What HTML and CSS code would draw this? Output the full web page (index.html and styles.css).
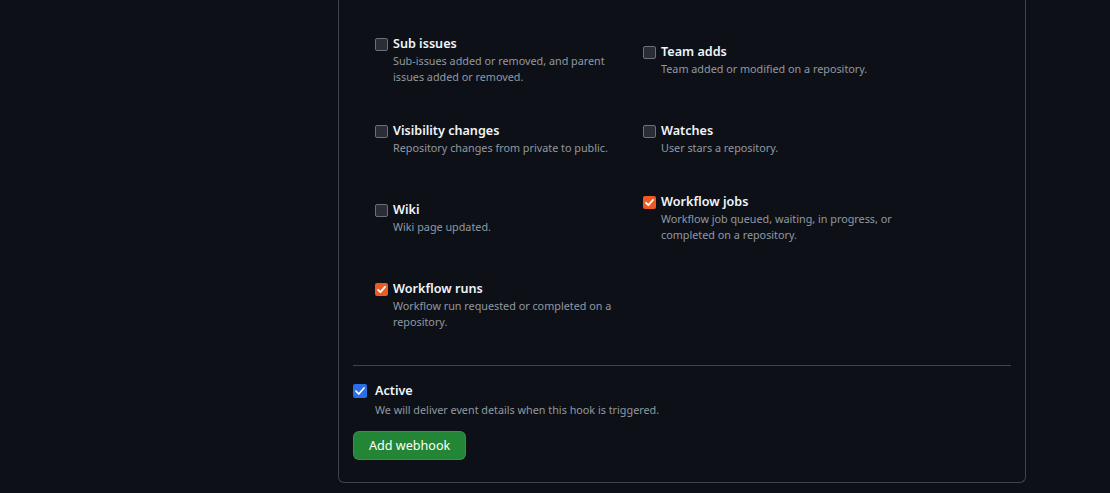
FILE: index.html
```html
<!DOCTYPE html>
<html lang="en">
<head>
<meta charset="utf-8">
<title>Add webhook</title>
<link rel="stylesheet" href="styles.css">
</head>
<body>
<div class="layout">
  <div class="sidebar"></div>
  <main class="box">
    <div class="events">
      <label class="event">
        <span class="cb"></span>
        <span class="event-text">
          <span class="event-title">Sub issues</span>
          <span class="event-note">Sub-issues added or removed, and parent issues added or removed.</span>
        </span>
      </label>
      <label class="event">
        <span class="cb"></span>
        <span class="event-text">
          <span class="event-title">Team adds</span>
          <span class="event-note">Team added or modified on a repository.</span>
        </span>
      </label>
      <label class="event">
        <span class="cb"></span>
        <span class="event-text">
          <span class="event-title">Visibility changes</span>
          <span class="event-note">Repository changes from private to public.</span>
        </span>
      </label>
      <label class="event">
        <span class="cb"></span>
        <span class="event-text">
          <span class="event-title">Watches</span>
          <span class="event-note">User stars a repository.</span>
        </span>
      </label>
      <label class="event">
        <span class="cb"></span>
        <span class="event-text">
          <span class="event-title">Wiki</span>
          <span class="event-note">Wiki page updated.</span>
        </span>
      </label>
      <label class="event">
        <span class="cb cb-checked"><svg viewBox="0 0 13 13" width="13" height="13"><polyline points="3,6.8 5.4,9.2 10,3.8" fill="none" stroke="#fff" stroke-width="1.8" stroke-linecap="round" stroke-linejoin="round"/></svg></span>
        <span class="event-text">
          <span class="event-title">Workflow jobs</span>
          <span class="event-note">Workflow job queued, waiting, in progress, or completed on a repository.</span>
        </span>
      </label>
      <label class="event">
        <span class="cb cb-checked"><svg viewBox="0 0 13 13" width="13" height="13"><polyline points="3,6.8 5.4,9.2 10,3.8" fill="none" stroke="#fff" stroke-width="1.8" stroke-linecap="round" stroke-linejoin="round"/></svg></span>
        <span class="event-text">
          <span class="event-title">Workflow runs</span>
          <span class="event-note">Workflow run requested or completed on a repository.</span>
        </span>
      </label>
    </div>
    <hr class="divider">
    <label class="active">
      <span class="cb-active"><svg viewBox="0 0 14 14" width="14" height="14"><polyline points="3,7.2 5.8,10 11,4" fill="none" stroke="#fff" stroke-width="1.7" stroke-linecap="round" stroke-linejoin="round"/></svg></span>
      <span class="event-text">
        <span class="event-title">Active</span>
        <span class="active-note">We will deliver event details when this hook is triggered.</span>
      </span>
    </label>
    <button class="btn-primary" type="button">Add webhook</button>
  </main>
</div>
</body>
</html>
```

FILE: styles.css
```css
* { box-sizing: border-box; }

html, body {
  margin: 0;
  background: #0d1117;
  color: #f0f6fc;
  font-family: "Noto Sans", "Liberation Sans", sans-serif;
}

.layout {
  display: grid;
  grid-template-columns: 338px 688px;
}

.box {
  border: 1px solid #3d444d;
  border-top: none;
  border-radius: 0 0 6px 6px;
  padding: 0 14px 22px;
}

.events {
  display: grid;
  grid-template-columns: 268px 268px;
  row-gap: 37px;
  align-items: center;
  padding-top: 35px;
  margin-left: 22px;
}

.event {
  display: flex;
  align-items: flex-start;
}

.cb {
  flex: none;
  width: 13px;
  height: 13px;
  margin-top: 3px;
  margin-right: 5px;
  border: 1px solid #6a6f78;
  border-radius: 2px;
  background: #2a2d35;
  display: flex;
}

.cb-checked {
  border: none;
  background: #ee5a24;
}

.cb svg { display: block; }

.event-text {
  display: flex;
  flex-direction: column;
  max-width: 236px;
}

.event-title {
  font-size: 12.6px;
  line-height: 18px;
  font-weight: 600;
  color: #f0f6fc;
}

.event-note {
  font-size: 10.8px;
  line-height: 16px;
  color: #9198a1;
}

.divider {
  margin: 35px 0 0;
  border: 0;
  height: 1px;
  background: #3d444d;
}

.active {
  display: flex;
  align-items: flex-start;
  margin-top: 16px;
}

.cb-active {
  flex: none;
  width: 14px;
  height: 14px;
  margin-top: 2px;
  margin-right: 8px;
  border-radius: 2px;
  background: #2a6fe6;
  display: flex;
}

.cb-active svg { display: block; }

.active .event-text { max-width: none; }

.active-note {
  font-size: 10.8px;
  line-height: 16px;
  color: #9198a1;
  margin-top: 2px;
}

.btn-primary {
  display: block;
  margin-top: 13px;
  height: 29px;
  padding: 0 15px;
  background: #238636;
  color: #ffffff;
  border: 1px solid rgba(240, 246, 252, 0.1);
  border-radius: 6px;
  font-family: "Noto Sans", "Liberation Sans", sans-serif;
  font-size: 12.6px;
  font-weight: 400;
  line-height: 27px;
}
```
